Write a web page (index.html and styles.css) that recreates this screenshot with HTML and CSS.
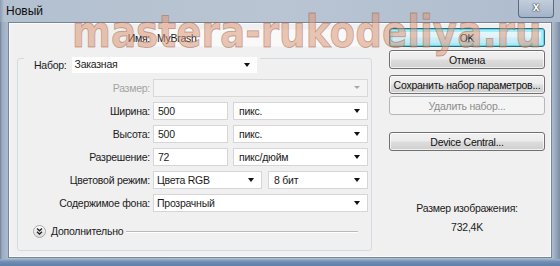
FILE: index.html
```html
<!DOCTYPE html>
<html lang="ru">
<head>
<meta charset="utf-8">
<title>Новый</title>
<link rel="stylesheet" href="styles.css">
</head>
<body>
<div class="window">
  <div class="titlebar">
    <span class="title">Новый</span>
    <div class="close">x</div>
  </div>
  <div class="frame">
    <div class="client">
      <div class="left">
        <div class="name-row">
          <span class="lbl">Имя:</span>
          <div class="input name">MyBrash</div>
        </div>
        <div class="group">
          <div class="group-head">
            <span class="head-lbl">Набор:</span>
            <div class="select preset">Заказная<i class="arrow"></i></div>
          </div>
          <div class="rows">
            <span class="lbl disabled">Размер:</span>
            <div class="select off"><i class="arrow"></i></div>

            <span class="lbl">Ширина:</span>
            <div class="pair">
              <div class="input num">500</div>
              <div class="select unit">пикс.<i class="arrow"></i></div>
            </div>

            <span class="lbl">Высота:</span>
            <div class="pair">
              <div class="input num">500</div>
              <div class="select unit">пикс.<i class="arrow"></i></div>
            </div>

            <span class="lbl">Разрешение:</span>
            <div class="pair">
              <div class="input num">72</div>
              <div class="select unit">пикс/дюйм<i class="arrow"></i></div>
            </div>

            <span class="lbl">Цветовой режим:</span>
            <div class="pair mode">
              <div class="select cmode">Цвета RGB<i class="arrow"></i></div>
              <div class="select bits">8 бит<i class="arrow"></i></div>
            </div>

            <span class="lbl">Содержимое фона:</span>
            <div class="select">Прозрачный<i class="arrow"></i></div>
          </div>
          <div class="advanced">
            <svg class="adv-icon" width="13" height="13" viewBox="0 0 13 13">
              <defs>
                <linearGradient id="g" x1="0" y1="0" x2="0" y2="1">
                  <stop offset="0" stop-color="#ffffff"/>
                  <stop offset="1" stop-color="#d8d8d8"/>
                </linearGradient>
              </defs>
              <circle cx="6.5" cy="6.5" r="6" fill="url(#g)" stroke="#a9a9a9"/>
              <path d="M4 3.5 L6.5 5.8 L9 3.5 M4 6.8 L6.5 9.1 L9 6.8" fill="none" stroke="#222" stroke-width="1.3"/>
            </svg>
            <span class="adv-text">Дополнительно</span>
            <span class="adv-line"></span>
          </div>
        </div>
      </div>
      <div class="right">
        <button class="btn default">OK</button>
        <button class="btn cancel">Отмена</button>
        <button class="btn save">Сохранить набор параметров...</button>
        <button class="btn del" disabled>Удалить набор...</button>
        <button class="btn device">Device Central...</button>
        <div class="size-lbl">Размер изображения:</div>
        <div class="size-val">732,4K</div>
      </div>
    </div>
  </div>
  <div class="watermark">mastera-rukodeliya.ru</div>
</div>
</body>
</html>
```

FILE: styles.css
```css
* { box-sizing: border-box; }

body {
  margin: 0;
  width: 560px;
  height: 266px;
  overflow: hidden;
  font-family: "Liberation Sans", Arial, sans-serif;
  font-size: 10.5px;
  letter-spacing: -0.25px;
  color: #1b1b1b;
  background: #8ea1b9;
}

.window {
  position: relative;
  width: 560px;
  height: 266px;
  display: flex;
  flex-direction: column;
  background: #a9b8ca;
}

.titlebar {
  height: 22px;
  display: flex;
  align-items: flex-start;
  padding-left: 6px;
  background: linear-gradient(90deg, #8b9cb2 0px, #b3c0cf 4px, #b9c5d3 50%, #aebcce 100%);
}

.title {
  font-size: 12px;
  letter-spacing: 0;
  line-height: 22px;
  color: #0d0d0d;
}

.close {
  margin-left: auto;
  margin-right: 6px;
  width: 36px;
  height: 18px;
  border: 1px solid #5a6a80;
  border-top: none;
  border-radius: 0 0 4px 4px;
  background: linear-gradient(#c3cedc, #a3b3c7);
  color: #fff;
  font-weight: bold;
  font-size: 12px;
  letter-spacing: 0;
  line-height: 15px;
  text-align: center;
  text-shadow: 0 0 2px #333, 0 0 1px #222;
}

.frame {
  flex: 1;
  padding: 0 8px 8px 8px;
  background: linear-gradient(90deg, #6f8097 0px, #9cadc2 2px, #aab9cb 7px, #b3c0cf 50%, #aab9cb calc(100% - 7px), #7b8ca3 100%);
  position: relative;
}

.frame::after {
  content: "";
  position: absolute;
  left: 0;
  right: 0;
  bottom: 0;
  height: 7px;
  background: linear-gradient(#9fb4cc, #6f8cb2 40%, #5f7ea8 100%);
}

.client {
  height: 100%;
  display: flex;
  background: #f0f0f0;
  border: 1px solid #74859c;
  box-shadow: inset 0 0 0 1px #fbfbfb;
}

.left {
  width: 364px;
  padding: 6px 0 0 8px;
}

.name-row {
  display: flex;
  align-items: center;
  height: 18px;
  margin-left: -8px;
}

.name-row .lbl {
  width: 141px;
  margin-right: 3px;
}

.lbl {
  text-align: right;
  line-height: 18px;
  white-space: nowrap;
}

.lbl.disabled { color: #a3a3a3; }

.input, .select {
  height: 18px;
  line-height: 16px;
  background: #fff;
  border: 1px solid #d6d6d6;
  padding-left: 3px;
  white-space: nowrap;
  position: relative;
}

.input.name {
  width: 219px;
  border-color: #f4f4f4;
  background: #f9f9f9;
}

.group {
  margin-top: 11px;
  width: 355px;
  border: 1px solid #d3dbe2;
  border-radius: 3px;
  padding: 0 3px 12px 0;
}

.group-head {
  display: inline-flex;
  align-items: center;
  margin: -5px 0 0 6px;
  padding: 0 3px 0 10px;
  background: #f0f0f0;
  height: 16px;
}

.head-lbl { margin-right: 5px; }

.select.preset {
  width: 185px;
  height: 16px;
  line-height: 14px;
  border: none;
}

.arrow {
  position: absolute;
  right: 7px;
  top: 50%;
  margin-top: -2px;
  width: 0;
  height: 0;
  border-left: 3.5px solid transparent;
  border-right: 3.5px solid transparent;
  border-top: 4px solid #111;
}

.rows {
  display: grid;
  grid-template-columns: 132px 215px;
  column-gap: 3px;
  row-gap: 5px;
  margin-top: 6px;
}

.select.off {
  background: #f4f4f4;
  border-color: #d8d8d8;
}

.select.off .arrow {
  border-top-color: #a8a8a8;
  border-left-width: 3px;
  border-right-width: 3px;
  border-top-width: 3px;
}

.pair {
  display: flex;
  gap: 5px;
}

.input.num { width: 75px; padding-left: 4px; }
.select.unit { flex: 1; padding-left: 5px; }

.pair.mode { gap: 6px; }
.select.cmode { width: 109px; }
.select.bits { flex: 1; padding-left: 5px; }

.advanced {
  display: flex;
  align-items: center;
  height: 14px;
  margin-top: 12px;
  padding-left: 15px;
}

.adv-icon { flex: none; }

.adv-text {
  margin-left: 5px;
  line-height: 14px;
}

.adv-line {
  flex: 1;
  height: 1px;
  margin: 0 10px 0 3px;
  background: #b9b9b9;
  box-shadow: 0 1px 0 #fff;
}

.right {
  width: 156px;
  margin-left: 16px;
  padding-top: 5px;
  display: flex;
  flex-direction: column;
}

.btn {
  height: 19px;
  width: 156px;
  padding: 0;
  font-family: inherit;
  font-size: 10.5px;
  letter-spacing: -0.25px;
  white-space: nowrap;
  color: #111;
  border: 1px solid #707070;
  border-radius: 3px;
  background: linear-gradient(#f2f2f2 0%, #ebebeb 48%, #dddddd 52%, #cfcfcf 100%);
  box-shadow: inset 0 0 0 1px rgba(255,255,255,0.7);
}

.btn.default {
  border-color: #2c6a7e;
  background: linear-gradient(#eaf7fb 0%, #dff3fa 48%, #cdeef8 52%, #bfe8f5 100%);
  box-shadow: inset 0 0 0 1px #5fd8ee, inset 0 0 0 3px #a6ecf7;
}

.btn.cancel { margin-top: 3px; }
.btn.save { margin-top: 6px; }
.btn.del {
  margin-top: 2px;
  color: #8c8c8c;
  border-color: #b5b8bb;
  background: #f4f4f4;
  box-shadow: none;
}
.btn.device { margin-top: 17px; }

.size-lbl {
  margin-top: 50px;
  text-align: center;
  line-height: 14px;
}

.size-val {
  margin-top: 5px;
  text-align: center;
  line-height: 14px;
}

.watermark {
  position: absolute;
  left: 72px;
  top: 9px;
  font-family: "DejaVu Sans", sans-serif;
  font-weight: bold;
  font-size: 45px;
  line-height: 45px;
  letter-spacing: 0;
  white-space: nowrap;
  color: rgba(222, 150, 118, 0.55);
  -webkit-text-stroke: 1px rgba(150, 90, 66, 0.45);
  transform: scaleX(0.83);
  transform-origin: left top;
  pointer-events: none;
}
```
